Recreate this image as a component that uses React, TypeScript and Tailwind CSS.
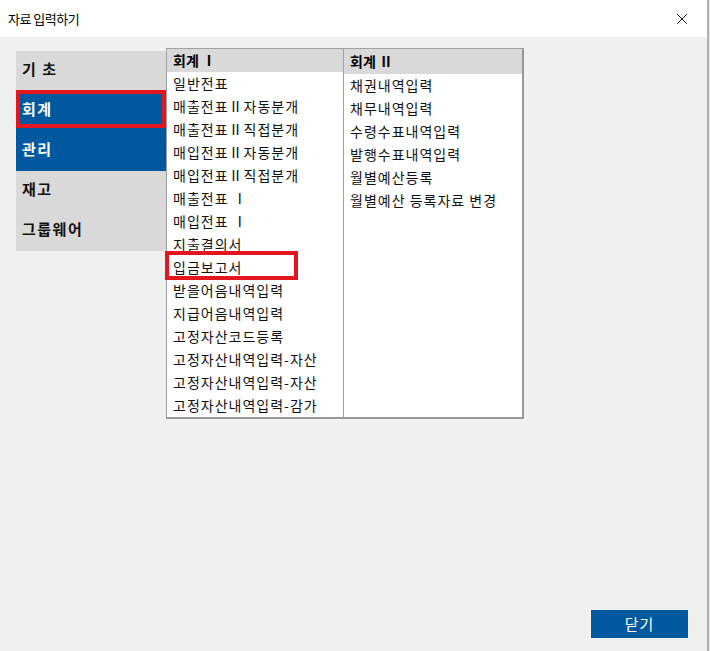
import { X } from "lucide-react";

const font = { fontFamily: '"Noto Sans CJK KR", "Noto Sans", sans-serif' };

type MenuItem = { label: string; active?: boolean; marked?: boolean };

const menu: MenuItem[] = [
  { label: "기 초" },
  { label: "회계", active: true, marked: true },
  { label: "관리", active: true },
  { label: "재고" },
  { label: "그룹웨어" },
];

const accountingOne = [
  "일반전표",
  "매출전표Ⅱ자동분개",
  "매출전표Ⅱ직접분개",
  "매입전표Ⅱ자동분개",
  "매입전표Ⅱ직접분개",
  "매출전표 Ⅰ",
  "매입전표 Ⅰ",
  "지출결의서",
  "입금보고서",
  "받을어음내역입력",
  "지급어음내역입력",
  "고정자산코드등록",
  "고정자산내역입력-자산",
  "고정자산내역입력-자산",
  "고정자산내역입력-감가",
];

const accountingTwo = [
  "채권내역입력",
  "채무내역입력",
  "수령수표내역입력",
  "발행수표내역입력",
  "월별예산등록",
  "월별예산 등록자료 변경",
];

const Column = ({
  title,
  items,
  marked,
  last,
}: {
  title: string;
  items: string[];
  marked?: string;
  last?: boolean;
}) => (
  <div className={`flex flex-col ${last ? "w-[178px]" : "w-[177px] border-r border-[#a0a0a0]"}`}>
    <div className="flex h-[25px] items-center bg-[#d9d9d9] px-[6px] text-[14px] font-bold text-black">
      {title}
    </div>
    <div className="flex flex-col">
      {items.map((item, i) => (
        <div
          key={`${item}-${i}`}
          className="relative flex h-[23px] items-center whitespace-nowrap px-[6px] text-[14px] tracking-[1px] text-[#111]"
        >
          {item}
          {item === marked ? (
            <span className="absolute left-[-2px] top-[-5px] h-[29px] w-[133px] border-[4px] border-[#e3161f]" />
          ) : null}
        </div>
      ))}
    </div>
  </div>
);

export default function App() {
  return (
    <div className="flex h-[651px] w-[710px] overflow-hidden bg-[#f0f0f0]" style={font}>
      <div className="flex w-[707px] flex-col">
        <div className="flex h-[37px] items-center justify-between bg-white pl-[8px] pr-[16px]">
          <span className="text-[13px] tracking-[-0.5px] text-black">자료 입력하기</span>
          <X size={18} strokeWidth={1.2} className="text-black" />
        </div>

        <div className="flex flex-1 flex-col">
          <div className="flex items-start pl-[16px] pt-[11px]">
            <div className="mt-[3px] flex w-[150px] flex-col bg-[#d9d9d9]">
              {menu.map((m) => (
                <div
                  key={m.label}
                  className={`relative flex h-[40px] items-center pb-[4px] pl-[6px] text-[15px] font-bold tracking-[1.5px] ${
                    m.active ? "bg-[#00599f] text-white" : "text-[#111]"
                  }`}
                >
                  {m.label}
                  {m.marked ? (
                    <span className="absolute left-0 top-[-1px] h-[38px] w-[150px] border-[4px] border-[#e3161f]" />
                  ) : null}
                </div>
              ))}
            </div>

            <div className="flex h-[371px] border border-r-2 border-b-2 border-[#a0a0a0] border-r-[#999] border-b-[#999] bg-white">
              <Column title="회계 Ⅰ" items={accountingOne} marked="입금보고서" />
              <Column title="회계 Ⅱ" items={accountingTwo} last />
            </div>
          </div>

          <div className="mt-auto flex justify-end pb-[13px] pr-[19px]">
            <button className="flex h-[28px] w-[97px] items-center justify-center bg-[#00599f] text-[15px] tracking-[1px] text-white">
              닫기
            </button>
          </div>
        </div>
      </div>
      <div className="w-[3px] border-l-2 border-[#b0b0b0] bg-[#e6e6e6]" />
    </div>
  );
}
